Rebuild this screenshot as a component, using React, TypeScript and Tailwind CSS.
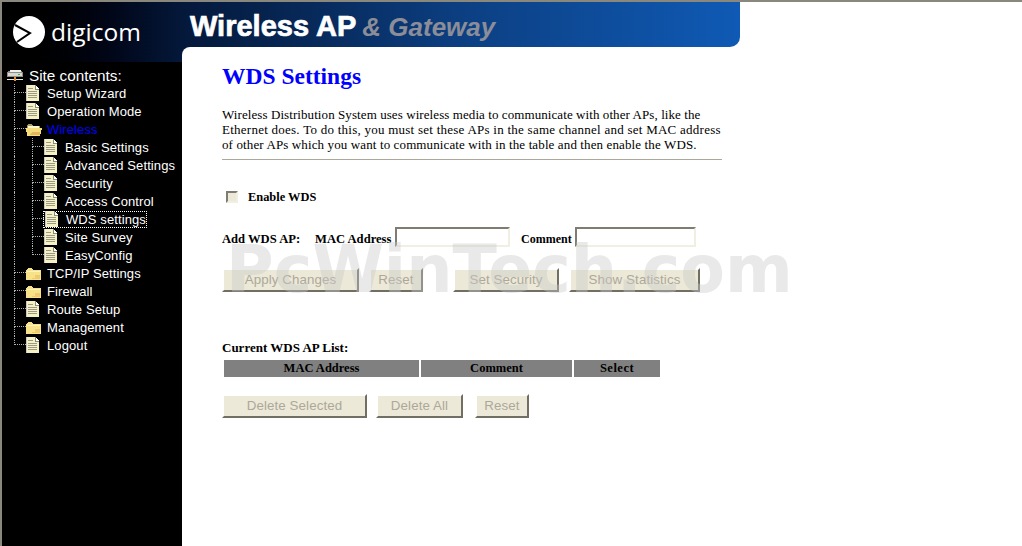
const arial = "font-['Liberation_Sans',Arial,sans-serif]";
const times = "font-['Liberation_Serif','Times_New_Roman',serif]";

type Item = {
  label: string;
  icon: "doc" | "folder" | "open";
  level: number;
  active?: boolean;
  selected?: boolean;
  last?: boolean;
};

const items: Item[] = [
  { label: "Setup Wizard", icon: "doc", level: 0 },
  { label: "Operation Mode", icon: "doc", level: 0 },
  { label: "Wireless", icon: "open", level: 0, active: true },
  { label: "Basic Settings", icon: "doc", level: 1 },
  { label: "Advanced Settings", icon: "doc", level: 1 },
  { label: "Security", icon: "doc", level: 1 },
  { label: "Access Control", icon: "doc", level: 1 },
  { label: "WDS settings", icon: "doc", level: 1, selected: true },
  { label: "Site Survey", icon: "doc", level: 1 },
  { label: "EasyConfig", icon: "doc", level: 1, last: true },
  { label: "TCP/IP Settings", icon: "folder", level: 0 },
  { label: "Firewall", icon: "folder", level: 0 },
  { label: "Route Setup", icon: "doc", level: 0 },
  { label: "Management", icon: "folder", level: 0 },
  { label: "Logout", icon: "doc", level: 0, last: true },
];

function DocIcon() {
  return (
    <svg width="13" height="16" viewBox="0 0 13 16" shapeRendering="crispEdges" className="shrink-0">
      <path d="M0 0H9L13 4V16H0Z" fill="#f6f1c4" />
      <path d="M9 0L13 4H9Z" fill="#ffffff" />
      <path d="M9 0V4H13" fill="none" stroke="#8a8a78" />
      <path d="M2 3.5H7M2 6.5H11M2 8.5H11M2 10.5H11M2 12.5H11" stroke="#9a9a86" />
      <path d="M0.5 0V16" stroke="#c8c8c0" />
    </svg>
  );
}

function FolderIcon() {
  return (
    <svg width="15" height="13" viewBox="0 0 15 13" shapeRendering="crispEdges" className="shrink-0">
      <path d="M1 2H2V1H6V2H7V3H15V13H0V3H1Z" fill="#f7e28a" />
      <path d="M1 4H14V5H1Z" fill="#fdf4c0" />
      <path d="M9 8H14V12H6V11H9Z" fill="#eecb70" />
    </svg>
  );
}

function OpenFolderIcon() {
  return (
    <svg width="16" height="13" viewBox="0 0 16 13" shapeRendering="crispEdges" className="shrink-0">
      <path d="M1 2H2V1H6V2H7V3H14V5H1Z" fill="#a89a60" />
      <path d="M2 3H13V6H2Z" fill="#fff7cf" />
      <path d="M0 5H16L14 13H1Z" fill="#f7dc7a" />
      <path d="M6 9H14L13.5 12H4Z" fill="#e4b85e" />
    </svg>
  );
}

function ServerIcon() {
  return (
    <svg width="16" height="15" viewBox="0 0 16 15" shapeRendering="crispEdges" className="shrink-0">
      <path d="M3 1H14V2H15V3H16V8H0V3H1V2H3Z" fill="#8f8f88" />
      <path d="M3 1H14V3H3Z" fill="#f2f2ec" />
      <path d="M1 4H15V7H1Z" fill="#d8d8d2" />
      <path d="M11 5H13V6H11Z" fill="#30c040" />
      <path d="M0 10H16V11H0Z" fill="#e8e8e2" />
      <path d="M7 8H9V12H7Z" fill="#e09030" />
    </svg>
  );
}

function TreeRow({ item }: { item: Item }) {
  return (
    <div className="flex h-[18px] items-center">
      {item.level === 1 && <div className="h-[18px] w-[18px] shrink-0 border-l border-dotted border-[#b0b0b0]" />}
      <div className="flex h-[18px] w-[12px] shrink-0 flex-col">
        <div className="h-[9px] border-b border-l border-dotted border-[#b0b0b0]" />
        {!item.last && <div className="h-[9px] border-l border-dotted border-[#b0b0b0]" />}
      </div>
      <div
        className={`flex h-[17px] items-center gap-[8px] ${
          item.selected ? "-ml-[1px] border border-dotted border-white pl-[1px]" : ""
        }`}
      >
        <div className="flex w-[13px] justify-start">
          {item.icon === "doc" && <DocIcon />}
          {item.icon === "folder" && <FolderIcon />}
          {item.icon === "open" && <OpenFolderIcon />}
        </div>
        <span
          className={`${arial} whitespace-nowrap text-[13px] leading-none tracking-[0.1px] ${
            item.active ? "text-[#0000ff]" : "text-white"
          }`}
        >
          {item.label}
        </span>
      </div>
    </div>
  );
}

function Sidebar() {
  return (
    <div className="flex w-[180px] shrink-0 flex-col bg-black">
      <div className="flex h-[60px] items-center gap-[6px] bg-gradient-to-r from-black to-[#04183a] pl-[11px]">
        <svg width="32" height="32" viewBox="0 0 32 32">
          <circle cx="16" cy="16" r="16" fill="#ffffff" />
          <path d="M2 9L17 17L4 26" fill="none" stroke="#000000" strokeWidth="2" />
        </svg>
        <span className="font-['Open_Sans',sans-serif] text-[24.5px] leading-none text-white">digicom</span>
      </div>
      <div className="pt-[5px]">
        <div className="flex h-[18px] items-center gap-[6px] pl-[5px]">
          <ServerIcon />
          <span className={`${arial} text-[15.3px] leading-none text-white`}>Site contents:</span>
        </div>
        <div className="-mt-[1px] pl-[12px]">
          {items.map((item) => (
            <TreeRow key={item.label} item={item} />
          ))}
        </div>
      </div>
    </div>
  );
}

function Btn({ label, className }: { label: string; className: string }) {
  return (
    <button
      disabled
      className={`${arial} ${className} border-2 border-t-white border-r-[#716f64] border-b-[#716f64] border-l-white bg-[#ece9d8] text-[13.33px] leading-none tracking-[0.1px] text-[#aca899]`}
    >
      {label}
    </button>
  );
}

function TextBox({ className }: { className: string }) {
  return (
    <div className={`${className} h-[20px] border-2 border-t-[#7f7d72] border-r-[#f1efe2] border-b-[#f1efe2] border-l-[#7f7d72] bg-white`} />
  );
}

export default function App() {
  return (
    <div className="relative flex h-[546px] w-[1022px] overflow-hidden border-t-2 border-l-2 border-[#8a887c] bg-white">
      <Sidebar />
      <div className="flex flex-1 flex-col bg-[#04183a]">
        <div className="bg-white">
          <div className="flex h-[45px] w-[558px] items-center gap-[6px] rounded-br-[10px] bg-gradient-to-r from-[#04183a] via-[#0c3f82] via-50% to-[#0f5ab5] pt-[4px] pl-[8px]">
            <span className={`${arial} text-[29px] font-bold leading-none text-white [-webkit-text-stroke:0.7px_white]`}>
              Wireless AP
            </span>
            <span className={`${arial} text-[26px] font-bold italic leading-none text-[#8b8d98]`}>&amp; Gateway</span>
          </div>
        </div>
        <div className={`${times} flex-1 rounded-tl-[8px] bg-white pl-[40px] text-black`}>
          <h1 className="mt-[15px] text-[23.5px] font-bold leading-[28px] text-[#0000ff]">WDS Settings</h1>
          <p className="mt-[17px] w-[500px] whitespace-nowrap text-[13px] leading-[15px]">
            <span className="block tracking-[0.08px]">
              Wireless Distribution System uses wireless media to communicate with other APs, like the
            </span>
            <span className="block tracking-[0.25px]">
              Ethernet does. To do this, you must set these APs in the same channel and set MAC address
            </span>
            <span className="block tracking-[0.12px]">
              of other APs which you want to communicate with in the table and then enable the WDS.
            </span>
          </p>
          <div className="mt-[7px] h-[1px] w-[500px] bg-[#aca899]" />
          <div className="mt-[31px] flex h-[12px] items-center pl-[4px]">
            <div className="h-[12px] w-[12px] border-2 border-t-[#7f7d72] border-r-[#f1efe2] border-b-[#f1efe2] border-l-[#7f7d72] bg-[#ece9d8]" />
            <span className="ml-[10px] text-[12.4px] font-bold leading-none">Enable WDS</span>
          </div>
          <div className="mt-[24px] flex h-[20px] items-end text-[12px] font-bold leading-[14px]">
            <span className="w-[93px] pb-[1px] text-[12.6px]">Add WDS AP:</span>
            <span className="w-[80px] pb-[1px] text-[12.6px]">MAC Address</span>
            <TextBox className="w-[115px]" />
            <span className="ml-[11px] w-[54px] pb-[1px]">Comment</span>
            <TextBox className="w-[121px]" />
          </div>
          <div className="mt-[21px] flex h-[24px]">
            <Btn label="Apply Changes" className="w-[137px]" />
            <Btn label="Reset" className="ml-[10px] w-[54px]" />
            <Btn label="Set Security" className="ml-[30px] w-[106px]" />
            <Btn label="Show Statistics" className="ml-[10px] w-[131px]" />
          </div>
          <div className="mt-[49px] text-[13px] font-bold leading-[14px]">Current WDS AP List:</div>
          <div className="ml-[2px] mt-[5px] flex h-[17px] gap-[2px] text-center text-[12.5px] font-bold leading-[17px]">
            <div className="w-[195px] bg-[#808080]">MAC Address</div>
            <div className="w-[151px] bg-[#808080]">Comment</div>
            <div className="w-[86px] bg-[#808080] tracking-[0.5px]">Select</div>
          </div>
          <div className="mt-[17px] flex h-[24px]">
            <Btn label="Delete Selected" className="w-[145px]" />
            <Btn label="Delete All" className="ml-[9px] w-[87px]" />
            <Btn label="Reset" className="ml-[12px] w-[54px]" />
          </div>
        </div>
      </div>
      {/* watermark sits over the form */}
      <div className="pointer-events-none absolute top-[235px] left-[224px] whitespace-nowrap font-['DejaVu_Sans',sans-serif] text-[65px] font-bold leading-none text-[#c8c8c8]/40">
        PcWinTech.com
      </div>
    </div>
  );
}
